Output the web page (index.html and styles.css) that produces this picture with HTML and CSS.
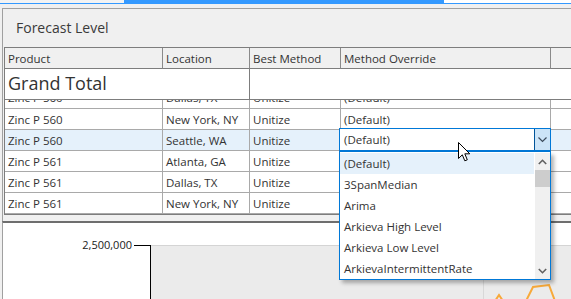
FILE: index.html
```html
<!DOCTYPE html>
<html lang="en">
<head>
    <meta charset="UTF-8">
    <title>Forecast Level</title>
    <link rel="stylesheet" href="styles.css">
</head>
<body>
    <!-- Tab strip along the top -->
    <div class="tabstrip">
        <div class="tab tab-left"></div>
        <div class="tab tab-active"></div>
        <div class="tab tab-right"></div>
    </div>

    <div class="panel level-panel">
        <div class="panel-title">Forecast Level</div>

        <div class="grid">
            <div class="row header-row">
                <div class="cell">Product</div>
                <div class="cell">Location</div>
                <div class="cell">Best Method</div>
                <div class="cell">Method Override</div>
                <div class="cell filler"></div>
            </div>

            <div class="row total-row">
                <div class="cell total-cell">Grand Total</div>
                <div class="cell total-rest"></div>
            </div>

            <!-- Row scrolled half under the frozen total row -->
            <div class="row partial-row">
                <div class="cell">Zinc P 560</div>
                <div class="cell">Dallas, TX</div>
                <div class="cell">Unitize</div>
                <div class="cell">(Default)</div>
                <div class="cell filler"></div>
            </div>
            <div class="row">
                <div class="cell">Zinc P 560</div>
                <div class="cell">New York, NY</div>
                <div class="cell">Unitize</div>
                <div class="cell">(Default)</div>
                <div class="cell filler"></div>
            </div>
            <div class="row selected-row">
                <div class="cell">Zinc P 560</div>
                <div class="cell">Seattle, WA</div>
                <div class="cell">Unitize</div>
                <div class="cell editor-cell">
                    <!-- Open combobox editor -->
                    <div class="combo">
                        <span class="combo-text">(Default)</span>
                        <span class="combo-button">
                            <svg width="9" height="6" viewBox="0 0 9 6"><path d="M0.5 0.5 L4.5 4.5 L8.5 0.5" fill="none" stroke="#3b4b5c" stroke-width="1.2"/></svg>
                        </span>
                    </div>
                    <div class="combo-list">
                        <div class="list-items">
                            <div class="list-item hot">(Default)</div>
                            <div class="list-item">3SpanMedian</div>
                            <div class="list-item">Arima</div>
                            <div class="list-item">Arkieva High Level</div>
                            <div class="list-item">Arkieva Low Level</div>
                            <div class="list-item">ArkievaIntermittentRate</div>
                        </div>
                        <div class="scrollbar">
                            <span class="scroll-arrow">
                                <svg width="9" height="6" viewBox="0 0 9 6"><path d="M0.8 5 L4.5 1.3 L8.2 5" fill="none" stroke="#606060" stroke-width="1.6"/></svg>
                            </span>
                            <span class="scroll-thumb"></span>
                            <span class="scroll-track"></span>
                            <span class="scroll-arrow">
                                <svg width="9" height="6" viewBox="0 0 9 6"><path d="M0.8 1 L4.5 4.7 L8.2 1" fill="none" stroke="#606060" stroke-width="1.6"/></svg>
                            </span>
                        </div>
                    </div>
                    <svg class="cursor" width="13" height="21" viewBox="0 0 13 21">
                        <path d="M0.5 0.5 L0.5 16.5 L4.3 12.8 L6.8 18.8 L9.3 17.8 L6.8 11.8 L11.8 11.8 Z" fill="#fff" stroke="#000" stroke-width="1"/>
                    </svg>
                </div>
                <div class="cell filler"></div>
            </div>
            <div class="row">
                <div class="cell">Zinc P 561</div>
                <div class="cell">Atlanta, GA</div>
                <div class="cell">Unitize</div>
                <div class="cell"></div>
                <div class="cell filler"></div>
            </div>
            <div class="row">
                <div class="cell">Zinc P 561</div>
                <div class="cell">Dallas, TX</div>
                <div class="cell">Unitize</div>
                <div class="cell"></div>
                <div class="cell filler"></div>
            </div>
            <div class="row">
                <div class="cell">Zinc P 561</div>
                <div class="cell">New York, NY</div>
                <div class="cell">Unitize</div>
                <div class="cell"></div>
                <div class="cell filler"></div>
            </div>
        </div>
    </div>

    <!-- Chart panel below the grid -->
    <div class="panel chart-panel">
        <svg class="chart" width="600" height="76" viewBox="0 0 600 76">
            <rect x="148" y="22" width="460" height="60" fill="#ebebeb"/>
            <line x1="148" y1="22.5" x2="608" y2="22.5" stroke="#d4d4d4"/>
            <line x1="480.5" y1="23" x2="480.5" y2="80" stroke="#d8d8d8"/>
            <text x="129" y="26" class="axis-label" text-anchor="end">2,500,000</text>
            <line x1="131" y1="22.5" x2="148" y2="22.5" stroke="#000"/>
            <line x1="147.5" y1="22" x2="147.5" y2="80" stroke="#000"/>
            <polyline points="492,78 496,72 500,78" fill="none" stroke="#f7a93a" stroke-width="2"/>
            <polyline points="523,78 530,64 546,62 552,78" fill="none" stroke="#f7a93a" stroke-width="2"/>
        </svg>
    </div>
</body>
</html>
```

FILE: styles.css
```css
/* Page frame */
body {
    margin: 0;
    height: 299px;
    overflow: hidden;
    background-color: #f0f0f0;
    font-family: "Open Sans", "Noto Sans", sans-serif;
    color: #333333;
}

/* Tab strip */
.tabstrip {
    display: flex;
    height: 4px;
}

.tab {
    box-sizing: border-box;
    height: 4px;
}

.tab-left {
    width: 124px;
    background-color: #f3f3f3;
    border-bottom: 1px solid #3399ff;
}

.tab-active {
    width: 320px;
    background-color: #3399ff;
}

.tab-right {
    flex: 1;
    background-color: #ffffff;
    border-bottom: 1px solid #3399ff;
}

/* Panels */
.panel {
    margin-left: 2px;
    border-left: 1px solid #a0a0a0;
}

.level-panel {
    margin-top: 4px;
    border-top: 1px solid #a0a0a0;
    padding: 0 0 6px 1px;
    background-color: #f0f0f0;
}

.panel-title {
    height: 38px;
    padding-left: 12px;
    font-size: 14px;
    line-height: 37px;
    color: #3a3a3a;
}

/* Grid */
.grid {
    width: 700px;
    border-top: 1px solid #7d7d7d;
    border-left: 1px solid #7d7d7d;
    border-bottom: 1px solid #7d7d7d;
    background-color: #ffffff;
}

.row {
    display: grid;
    grid-template-columns: 158px 87px 91px 210px 154px;
    height: 21px;
}

.cell {
    box-sizing: border-box;
    height: 21px;
    padding-left: 3px;
    border-right: 1px solid #a9a9a9;
    border-bottom: 1px solid #a9a9a9;
    font-size: 11.5px;
    line-height: 21px;
    white-space: nowrap;
}

.header-row .cell {
    background-color: #f0f0f0;
    border-right-color: #8a8a8a;
    border-bottom-color: #7d7d7d;
}

.total-row {
    grid-template-columns: 245px 455px;
    height: 31px;
}

.total-row .cell {
    height: 31px;
    border-bottom-color: #7d7d7d;
}

.total-cell {
    font-size: 18px;
    line-height: 28px;
    border-right-color: #7d7d7d;
}

.total-rest {
    border-right: none;
}

/* Only the lower part of this row shows */
.partial-row {
    height: 9px;
}

.partial-row .cell {
    height: 9px;
    display: flex;
    align-items: flex-end;
    overflow: hidden;
}

.selected-row .cell {
    background-color: #e5f1fb;
}

.filler {
    border-right: none;
}

/* Combobox editor */
.editor-cell {
    position: relative;
}

.combo {
    position: absolute;
    left: -2px;
    top: -2px;
    width: 212px;
    height: 24px;
    box-sizing: border-box;
    display: flex;
    background-color: #ffffff;
    border: 1px solid #0078d7;
    border-bottom-width: 2px;
}

.combo-text {
    flex: 1;
    padding-left: 4px;
    line-height: 22px;
}

.combo-button {
    width: 15px;
    display: flex;
    align-items: center;
    justify-content: center;
    background-color: #cce4f7;
    border-left: 1px solid #005499;
}

.combo-list {
    position: absolute;
    left: -2px;
    top: 22px;
    width: 212px;
    height: 128px;
    box-sizing: border-box;
    display: flex;
    padding-top: 1px;
    background-color: #ffffff;
    border: 1px solid #0078d7;
    border-top: none;
    box-shadow: 3px 3px 4px rgba(0, 0, 0, 0.3);
    z-index: 2;
}

.list-items {
    flex: 1;
}

.list-item {
    height: 21px;
    padding-left: 4px;
    line-height: 22px;
    font-size: 11.5px;
}

.list-item.hot {
    margin-right: 1px;
    background-color: #e5f1fb;
}

.scrollbar {
    width: 15px;
    display: flex;
    flex-direction: column;
    background-color: #f0f0f0;
}

.scroll-arrow {
    height: 17px;
    display: flex;
    align-items: center;
    justify-content: center;
}

.scroll-thumb {
    height: 17px;
    background-color: #cdcdcd;
}

.scroll-track {
    flex: 1;
}

.cursor {
    position: absolute;
    left: 117px;
    top: 12px;
    z-index: 3;
}

/* Chart panel */
.chart-panel {
    height: 76px;
    border-top: 2px solid #6e6e6e;
    background-color: #ffffff;
}

.chart {
    display: block;
}

.axis-label {
    font-family: "Open Sans", sans-serif;
    font-size: 11px;
    fill: #1a1a1a;
}
```
